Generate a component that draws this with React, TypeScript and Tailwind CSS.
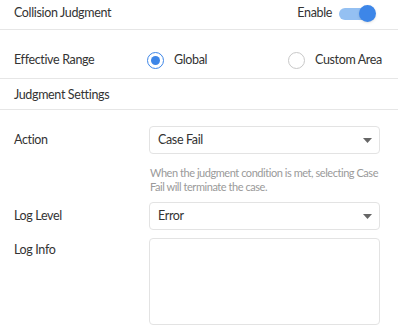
import React, { useState } from "react";

const font = { fontFamily: "Lato, 'Noto Sans', sans-serif" };

function Toggle({ on }: { on: boolean }) {
  return (
    <div className="relative w-[37px] h-[17px] flex items-center">
      <div className={`h-[12px] w-[30px] rounded-full ${on ? "bg-[#94c0f2]" : "bg-gray-300"}`} />
      <div className={`absolute top-0 h-[17px] w-[17px] rounded-full ${on ? "right-0 bg-[#3d86e8]" : "left-0 bg-white"} shadow-sm`} />
    </div>
  );
}

function Radio({ checked, label }: { checked: boolean; label: string }) {
  return (
    <label className="flex items-center gap-[10px] cursor-pointer">
      <span
        className={`flex h-[17px] w-[17px] items-center justify-center rounded-full border-[1.5px] ${
          checked ? "border-[#3d86e8]" : "border-[#c8c8c8]"
        }`}
      >
        {checked && <span className="h-[9px] w-[9px] rounded-full bg-[#3d86e8]" />}
      </span>
      <span>{label}</span>
    </label>
  );
}

function Select({ value }: { value: string }) {
  return (
    <div className="flex h-[28px] w-[231px] items-center justify-between rounded-[4px] border border-[#e3e3e3] pl-[8px] pr-[7px]">
      <span>{value}</span>
      <svg width="9" height="5" viewBox="0 0 9 5">
        <path d="M0 0h9L4.5 5z" fill="#666" />
      </svg>
    </div>
  );
}

export default function App() {
  const [enabled] = useState(true);
  return (
    <div
      className="w-[398px] h-[336px] bg-white text-[12.5px] tracking-[-0.35px] text-[#333]"
      style={font}
    >
      <div className="flex h-[30px] items-center justify-between border-b border-[#e6e6e6] pl-[14px] pr-[22px] pb-[2px]">
        <span>Collision Judgment</span>
        <div className="flex items-center gap-[7px]">
          <span>Enable</span>
          <Toggle on={enabled} />
        </div>
      </div>
      <div className="flex h-[49px] items-center border-b border-[#e6e6e6] pl-[14px] pt-[12px]">
        <span className="w-[133px]">Effective Range</span>
        <div className="w-[141px]">
          <Radio checked label="Global" />
        </div>
        <Radio checked={false} label="Custom Area" />
      </div>
      <div className="flex h-[31px] items-center border-b border-[#e6e6e6] pl-[14px] pt-[3px]">
        <span>Judgment Settings</span>
      </div>
      <div className="flex flex-col pl-[14px] pt-[16px]">
        <div className="flex items-center">
          <span className="w-[135px]">Action</span>
          <Select value="Case Fail" />
        </div>
        <p className="ml-[136px] mt-[12px] w-[236px] text-[11px] tracking-[-0.45px] leading-[14px] text-[#9a9a9a]">
          When the judgment condition is met, selecting Case Fail will terminate the case.
        </p>
        <div className="mt-[8px] flex items-center">
          <span className="w-[135px]">Log Level</span>
          <Select value="Error" />
        </div>
        <div className="mt-[8px] flex items-start">
          <span className="w-[135px] pt-[3px]">Log Info</span>
          <textarea className="h-[87px] w-[231px] resize-none rounded-[4px] border border-[#e3e3e3] outline-none" />
        </div>
      </div>
    </div>
  );
}
